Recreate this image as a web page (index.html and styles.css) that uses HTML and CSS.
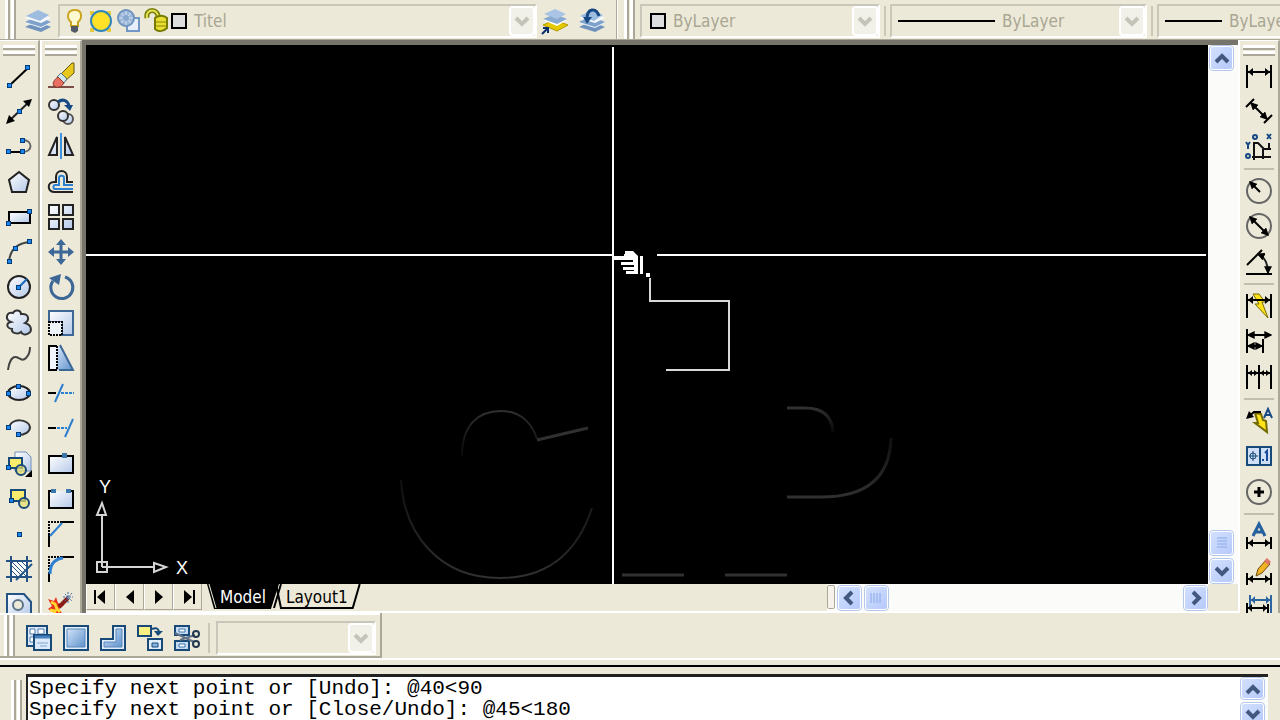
FILE: index.html
```html
<!DOCTYPE html>
<html lang="en">
<head>
<meta charset="utf-8">
<title>Drawing editor</title>
<link rel="stylesheet" href="styles.css">
</head>
<body>
<svg class="defs" aria-hidden="true">
  <defs>
    <linearGradient id="glass" x1="0" y1="0" x2="1" y2="1"><stop offset="0" stop-color="#ffffff"/><stop offset="1" stop-color="#b4c8e8"/></linearGradient>
    <linearGradient id="steel" x1="0" y1="0" x2="1" y2="1"><stop offset="0" stop-color="#d4e4f8"/><stop offset="1" stop-color="#5f92cc"/></linearGradient>
    <linearGradient id="fadeUp" x1="0" y1="0" x2="0" y2="1"><stop offset="0" stop-color="#303030"/><stop offset="1" stop-color="#080808"/></linearGradient>
    <linearGradient id="fadeDown" x1="0" y1="0" x2="0" y2="1"><stop offset="0" stop-color="#101010"/><stop offset="1" stop-color="#303030"/></linearGradient>
    <symbol id="chev-down" viewBox="0 0 16 16"><path d="M2 5l6 6 6-6" fill="none" stroke="currentColor" stroke-width="4"/></symbol>
    <symbol id="chev-up" viewBox="0 0 16 16"><path d="M2 12l6-6 6 6" fill="none" stroke="currentColor" stroke-width="4"/></symbol>
    <symbol id="chev-left" viewBox="0 0 16 16"><path d="M11 2L5 8l6 6" fill="none" stroke="currentColor" stroke-width="4"/></symbol>
    <symbol id="chev-right" viewBox="0 0 16 16"><path d="M5 2l6 6-6 6" fill="none" stroke="currentColor" stroke-width="4"/></symbol>
    <symbol id="node" viewBox="0 0 5 5"><rect width="5" height="5" fill="#003c78"/><rect x="1" y="1" width="3" height="3" fill="#1c86ee"/></symbol>
    <symbol id="hdim" viewBox="0 0 26 12"><path d="M1 0v12M25 0v12" stroke="#000" stroke-width="2"/><path d="M2 6h22" stroke="#000" stroke-width="2"/><path d="M2 6l5-4v8zM24 6l-5-4v8z"/></symbol>
    <symbol id="stack" viewBox="0 0 26 26"><path d="M0 19l12-6 14 6-10 5z" fill="#6f93bd"/><path d="M0 15l12-6 14 6-10 5z" fill="#eef4fb"/><path d="M0 14l12-6 14 6-10 5z" fill="#7fa2cb"/><path d="M0 10l12-6 14 6-10 5z" fill="#f5f9fd"/><path d="M1 8l12-6 11 5-9 6z" fill="#9dbce0"/></symbol>
    <marker id="tip" viewBox="0 0 6 6" refX="5" refY="3" markerWidth="8" markerHeight="8" markerUnits="userSpaceOnUse" orient="auto-start-reverse"><path d="M0 0l6 3-6 3z"/></marker>
  </defs>
</svg>

<header class="topbar">
  <div class="band">
    <span class="grip"></span>
    <button class="tool layers" aria-label="Layer properties"><svg viewBox="0 0 26 26"><use href="#stack"/></svg></button>
    <div class="combo combo-layer">
      <svg class="state" viewBox="0 0 108 26" aria-hidden="true">
        <path d="M12 2c-9 0-8 9-4 12v4h7v-4c4-3 5-12-3-12z" fill="#fffbd0" stroke="#c9a520" stroke-width="2"/><path d="M8 18h7v5l-3 2-4-2z" fill="#555b66"/>
        <path d="M27 3h4v4h-4zM44 3h4v4h-4zM27 20h4v4h-4zM44 20h4v4h-4z" fill="#e8c93c"/><circle cx="38" cy="13" r="10" fill="#ffe228" stroke="#3185b8" stroke-width="2"/>
        <path d="M65 10h11v13H64v-8" fill="#e6eefa" stroke="#7397c5" stroke-width="2"/><circle cx="63" cy="10" r="8" fill="#9eb9d9" stroke="#6e94bf" stroke-width="2"/><path d="M56 10h14M63 3v14M58 5l10 10M68 5L58 15" stroke="#d5e2f3"/><circle cx="63" cy="10" r="3" fill="#88a8d0"/>
        <path d="M84 10c-2-10 12-10 11 0v3" fill="none" stroke="#777b00" stroke-width="5"/><path d="M84 10c-2-10 12-10 11 0v3" fill="none" stroke="#e3e05a" stroke-width="2"/><path d="M92 10c4-3 9-3 12 0v10c-4 4-9 4-12 1z" fill="#e9df32" stroke="#777b00" stroke-width="2"/><path d="M93 14h10M93 18h10" stroke="#8a8500"/>
      </svg>
      <span class="swatch"></span>
      <select aria-label="Layer" disabled><option>Titel</option></select>
      <span class="drop"><svg viewBox="0 0 16 16"><use href="#chev-down"/></svg></span>
    </div>
    <button class="tool" aria-label="Make object's layer current"><svg viewBox="0 0 26 26"><path d="M1 17l12-5 13 5-11 6z" fill="#e4c800" stroke="#b39b00"/><path d="M1 12l12-5 12 5-10 6z" fill="#fff"/><path d="M1 11l12-5 12 5-10 5z" fill="#88a9d0"/><path d="M2 6l11-5 11 5-9 5z" fill="#a9c4e4"/><path d="M0 26l5-5M1 20h5v5" fill="none" stroke="#0b3070" stroke-width="2"/></svg></button>
    <button class="tool" aria-label="Layer previous"><svg viewBox="0 0 26 26"><use href="#stack"/><path d="M20 8c-3-9-12-8-12 3" fill="none" stroke="#174a85" stroke-width="3"/><path d="M4 9h9l-5 7z" fill="#174a85"/></svg></button>
  </div>
  <div class="band band-props">
    <span class="grip"></span>
    <div class="combo combo-color">
      <span class="swatch"></span>
      <select aria-label="Color" disabled><option>ByLayer</option></select>
      <span class="drop"><svg viewBox="0 0 16 16"><use href="#chev-down"/></svg></span>
    </div>
    <span class="vsep"></span>
    <div class="combo combo-line">
      <span class="sample"></span>
      <select aria-label="Linetype" disabled><option>ByLayer</option></select>
      <span class="drop"><svg viewBox="0 0 16 16"><use href="#chev-down"/></svg></span>
    </div>
    <span class="vsep"></span>
    <div class="combo combo-line">
      <span class="sample sample-short"></span>
      <select aria-label="Lineweight" disabled><option>ByLayer</option></select>
      <span class="drop"><svg viewBox="0 0 16 16"><use href="#chev-down"/></svg></span>
    </div>
  </div>
</header>

<main class="middle">
  <div class="palette" role="toolbar" aria-label="Draw">
    <span class="grip-top"></span>
    <div class="tools">
      <button class="tool" aria-label="Line"><svg viewBox="0 0 26 26"><path d="M4 22L22 5" stroke="#000" stroke-width="2"/><use href="#node" x="1" y="20" width="5" height="5"/><use href="#node" x="19" y="2" width="5" height="5"/></svg></button>
      <button class="tool" aria-label="Construction line"><svg viewBox="0 0 26 26"><path d="M3 23L23 4" stroke="#222" stroke-width="2"/><path d="M0 26l3-9 6 6zM26 1l-9 2 6 6z"/><use href="#node" x="11" y="11" width="5" height="5"/></svg></button>
      <button class="tool" aria-label="Polyline"><svg viewBox="0 0 26 26"><path d="M3 19h14" stroke="#000" stroke-width="2"/><path d="M17 7c10 0 10 12 0 12" fill="none" stroke="#666" stroke-width="2"/><use href="#node" x="0" y="16" width="5" height="5"/><use href="#node" x="14" y="16" width="5" height="5"/><use href="#node" x="14" y="5" width="5" height="5"/></svg></button>
      <button class="tool" aria-label="Polygon"><svg viewBox="0 0 26 26"><path d="M13 3l10 8-3 12H6L3 11z" fill="url(#glass)" stroke="#222" stroke-width="2"/></svg></button>
      <button class="tool" aria-label="Rectangle"><svg viewBox="0 0 26 26"><path d="M3 8h21v11H3z" fill="url(#glass)" stroke="#000" stroke-width="2"/><use href="#node" x="0" y="17" width="5" height="5"/><use href="#node" x="21" y="5" width="5" height="5"/></svg></button>
      <button class="tool" aria-label="Arc"><svg viewBox="0 0 26 26"><path d="M3 23C4 10 11 4 24 3" fill="none" stroke="#444" stroke-width="2"/><use href="#node" x="1" y="20" width="5" height="5"/><use href="#node" x="7" y="7" width="5" height="5"/><use href="#node" x="21" y="0" width="5" height="5"/></svg></button>
      <button class="tool" aria-label="Circle"><svg viewBox="0 0 26 26"><circle cx="13" cy="13" r="11" fill="url(#glass)" stroke="#222" stroke-width="2"/><path d="M13 13l8-8" stroke="#1668b8" stroke-width="2"/><use href="#node" x="10" y="11" width="5" height="5"/></svg></button>
      <button class="tool" aria-label="Revision cloud"><svg viewBox="0 0 26 26"><path d="M5 12C-2 9 1 1 7 3c2-4 8-3 8 1 8-1 9 6 4 9 7 2 7 8 4 10-4 3-7 1-8-1-3 3-10 1-9-3-6-1-6-6-1-7z" fill="url(#glass)" stroke="#333" stroke-width="2"/></svg></button>
      <button class="tool" aria-label="Spline"><svg viewBox="0 0 26 26"><path d="M2 25c1-8 4-14 8-13s6 5 10 1c3-3 4-6 4-11" fill="none" stroke="#444" stroke-width="2"/></svg></button>
      <button class="tool" aria-label="Ellipse"><svg viewBox="0 0 26 26"><ellipse cx="13" cy="13" rx="11" ry="7" fill="url(#glass)" stroke="#222" stroke-width="2"/><use href="#node" x="0" y="11" width="5" height="5"/><use href="#node" x="10" y="4" width="5" height="5"/><use href="#node" x="20" y="11" width="5" height="5"/></svg></button>
      <button class="tool" aria-label="Ellipse arc"><svg viewBox="0 0 26 26"><path d="M3 13C5 2 23 4 24 12c0 5-5 8-12 8" fill="url(#glass)" stroke="#333" stroke-width="2"/><use href="#node" x="0" y="10" width="5" height="5"/><use href="#node" x="10" y="17" width="5" height="5"/></svg></button>
      <button class="tool" aria-label="Insert block"><svg viewBox="0 0 26 26"><path d="M9 1h11l5 5v14H9z" fill="url(#glass)" stroke="#7391b8"/><path d="M3 7h13v10H3z" fill="#f8ec6c" stroke="#174a78" stroke-width="2"/><circle cx="15" cy="19" r="5" fill="#e9de68" fill-opacity=".7" stroke="#174a78" stroke-width="2"/><use href="#node" x="0" y="14" width="5" height="5"/><path d="M26 19v7h-7z"/></svg></button>
      <button class="tool" aria-label="Make block"><svg viewBox="0 0 26 26"><path d="M5 4h14v11H5z" fill="#f8ec6c" stroke="#174a78" stroke-width="2"/><circle cx="18" cy="17" r="5" fill="#e9de68" fill-opacity=".7" stroke="#174a78" stroke-width="2"/><use href="#node" x="3" y="12" width="5" height="5"/></svg></button>
      <button class="tool" aria-label="Point"><svg viewBox="0 0 26 26"><use href="#node" x="11" y="11" width="5" height="5"/></svg></button>
      <button class="tool" aria-label="Hatch"><svg viewBox="0 0 26 26"><path d="M5 5h16v16H5z" fill="#fff"/><path d="M5 9l12 12M5 14l7 7M5 5l16 16M10 5l11 11M15 5l6 6" stroke="#245485"/><path d="M5 0v26M21 0v26M0 5h26M0 21h26" stroke="#245485" stroke-width="2"/><path d="M26 8L10 24" stroke="#245485" stroke-width="2"/></svg></button>
      <button class="tool" aria-label="Region"><svg viewBox="0 0 26 26"><path d="M1 2h17l7 8v15H1z" fill="url(#glass)" stroke="#245485" stroke-width="2"/><circle cx="12" cy="13" r="5" fill="#ece9d8" stroke="#5b7389" stroke-width="2"/></svg></button>
    </div>
  </div>

  <div class="palette" role="toolbar" aria-label="Modify">
    <span class="grip-top"></span>
    <div class="tools">
      <button class="tool" aria-label="Erase"><svg viewBox="0 0 26 26"><path d="M0 24h26" stroke="#7b4d44" stroke-width="2"/><path d="M12 12L24 0h2v10L17 18z" fill="#e8c81d" stroke="#675914"/><path d="M9 14l4-4 6 6-4 5z" fill="#cfe6ee" stroke="#527482"/><path d="M10 14l6 6c-3 5-7 5-10 3-2-3 0-6 4-9z" fill="#e96f60" stroke="#8a3528"/></svg></button>
      <button class="tool" aria-label="Copy"><svg viewBox="0 0 26 26"><circle cx="6" cy="7" r="5" fill="url(#glass)" stroke="#333" stroke-width="2"/><circle cx="20" cy="21" r="5" fill="url(#glass)" stroke="#555" stroke-width="2"/><circle cx="15" cy="18" r="5" fill="url(#glass)" stroke="#333" stroke-width="2"/><path d="M10 4c5-4 10-1 11 4" fill="none" stroke="#174a85" stroke-width="3"/><path d="M16 7h9l-3 6z" fill="#174a85"/></svg></button>
      <button class="tool" aria-label="Mirror"><svg viewBox="0 0 26 26"><path d="M9 4v18H1zM17 4v18h8z" fill="url(#glass)" stroke="#222" stroke-width="2"/><path d="M13 0v26" stroke="#3c92e0" stroke-width="2"/></svg></button>
      <button class="tool" aria-label="Offset"><svg viewBox="0 0 26 26"><path d="M25 23H6c-7-1-7-10 0-10h2V8c0-8 11-8 11 0v5h6" fill="none" stroke="#222" stroke-width="2"/><path d="M25 20H7c-2 0-2-4 0-4h4V9c0-3 5-3 5 0v7h9" fill="none" stroke="#2d7fd0" stroke-width="2"/></svg></button>
      <button class="tool" aria-label="Array"><svg viewBox="0 0 26 26"><path d="M1 1h10v10H1zM15 1h10v10H15zM1 15h10v10H1zM15 15h10v10H15z" fill="url(#glass)" stroke="#222" stroke-width="2"/></svg></button>
      <button class="tool" aria-label="Move"><svg viewBox="0 0 26 26"><path d="M13 4v18M4 13h18" stroke="#3c6796" stroke-width="3"/><path d="M13 0l5 6H8zM13 26l5-6H8zM0 13l6-5v10zM26 13l-6-5v10z" fill="#3c6796"/></svg></button>
      <button class="tool" aria-label="Rotate"><svg viewBox="0 0 26 26"><path d="M5 7a11 11 0 1 0 12-4" fill="none" stroke="#3c6796" stroke-width="3"/><path d="M1 4l12-4-2 11z" fill="#3c6796"/></svg></button>
      <button class="tool" aria-label="Scale"><svg viewBox="0 0 26 26"><path d="M1 12V1h24v24H14V12z" fill="url(#glass)" stroke="#3c6796" stroke-width="2"/><path d="M1 12h13v13H1z" fill="#eef3fa" stroke="#000" stroke-width="2" stroke-dasharray="2 1"/></svg></button>
      <button class="tool" aria-label="Stretch"><svg viewBox="0 0 26 26"><path d="M13 1l12 24H9V1z" fill="url(#steel)"/><path d="M12 0l13 25H11" fill="none" stroke="#3c6796" stroke-width="2"/><path d="M9 1H1v24h8" fill="#f2f5fb" stroke="#000" stroke-width="2"/><path d="M9 1v24" stroke="#000" stroke-width="2" stroke-dasharray="2 1"/></svg></button>
      <button class="tool" aria-label="Trim"><svg viewBox="0 0 26 26"><path d="M0 13h8" stroke="#000" stroke-width="2"/><path d="M15 4L7 22" stroke="#2d7fd0" stroke-width="2"/><path d="M13 13h13" stroke="#2d7fd0" stroke-width="2" stroke-dasharray="3 1"/></svg></button>
      <button class="tool" aria-label="Extend"><svg viewBox="0 0 26 26"><path d="M0 13h8" stroke="#000" stroke-width="2"/><path d="M25 4l-8 18" stroke="#2d7fd0" stroke-width="2"/><path d="M9 13h10" stroke="#2d7fd0" stroke-width="2" stroke-dasharray="3 1"/></svg></button>
      <button class="tool" aria-label="Break at point"><svg viewBox="0 0 26 26"><path d="M1 5h24v17H1z" fill="url(#glass)" stroke="#000" stroke-width="2"/><path d="M14 2h5v5h-5z" fill="#3c77ac"/></svg></button>
      <button class="tool" aria-label="Break"><svg viewBox="0 0 26 26"><path d="M5 5H1v17h24V5h-4" fill="url(#glass)" stroke="#000" stroke-width="2"/><path d="M3 3h5v4H3zM18 3h5v4h-5z" fill="#3c77ac"/></svg></button>
      <button class="tool" aria-label="Chamfer"><svg viewBox="0 0 26 26"><path d="M1 14V1h13" fill="none" stroke="#000" stroke-width="2" stroke-dasharray="2 1"/><path d="M14 1h12M1 14v12" stroke="#000" stroke-width="2"/><path d="M2 15L14 2" stroke="#2d7fd0" stroke-width="2"/></svg></button>
      <button class="tool" aria-label="Fillet"><svg viewBox="0 0 26 26"><path d="M1 14V1h13" fill="none" stroke="#000" stroke-width="2" stroke-dasharray="2 1"/><path d="M14 1h12M1 16v10" stroke="#000" stroke-width="2"/><path d="M2 18C2 8 6 3 15 2" fill="none" stroke="#2d7fd0" stroke-width="3"/></svg></button>
      <button class="tool" aria-label="Explode"><svg viewBox="0 0 26 26"><path d="M0 7l6 2 2-4 2 6 6 2-5 4 5 7-6-2-3 4-2-6-5-3 4-3z" fill="#e9301c"/><path d="M3 10l4 2 2 5 3 3M2 18l5 1-1 5" fill="none" stroke="#ffd52e" stroke-width="3"/><path d="M11 15l9-9" stroke="#8c1c18" stroke-width="4"/><path d="M20 0v12M15 5h10M17 2l7 7M24 1l-7 8" stroke="#456fa5" stroke-dasharray="2 1"/></svg></button>
    </div>
  </div>

  <section class="workspace">
    <div class="canvas">
      <svg viewBox="86 45 1122 539" preserveAspectRatio="xMinYMin slice" role="img" aria-label="Drawing area">
        <g fill="none" stroke="#303030" stroke-width="3">
          <path d="M462 456C462 425 478 411 501 411c20 0 31 13 36 28" stroke="url(#fadeUp)" stroke-width="2"/>
          <path d="M537 440l51-12"/>
          <path d="M401 480c3 54 38 98 99 98 54 0 80-33 92-70" stroke="url(#fadeDown)" stroke-width="2"/>
          <path d="M787 408h18c18 0 27 9 28 24" stroke="url(#fadeUp)"/>
          <path d="M787 497h34c42 0 69-17 70-59" stroke="url(#fadeDown)"/>
          <path d="M622 575h62M725 575h62"/>
        </g>
        <g fill="none" stroke="#fff" stroke-width="2">
          <path d="M86 255h527M657 255h549M613 47v537"/>
          <path d="M650 278v23h79v69h-63" stroke="#d8d8d8"/>
        </g>
        <g fill="#fff">
          <path d="M613 256h11v-2h1v-3h8l5 5v18h-12v-3h8v-1h-11v-3h11v-2h-13v-3h12v-2h-20z"/>
          <path d="M640 256h3v18h-3zM646 273h4v4h-4z"/>
        </g>
        <g fill="none" stroke="#d4d4d4" stroke-width="2">
          <path d="M102 567v-52M102 567h52M97 562h10v10H97zM97 515h9l-4-12zM154 563v9l12-5z"/>
        </g>
        <g class="axis"><text x="99" y="493">Y</text><text x="176" y="574">X</text></g>
      </svg>
    </div>
    <div class="vscroll">
      <button class="sbtn" aria-label="Scroll up"><svg viewBox="0 0 16 16"><use href="#chev-up"/></svg></button>
      <span class="track"></span>
      <button class="sbtn" aria-label="Vertical scroll thumb"><svg viewBox="0 0 16 16"><path d="M3 3h10M3 6h10M3 9h10M3 12h10" stroke="#8aa8e8"/></svg></button>
      <button class="sbtn" aria-label="Scroll down"><svg viewBox="0 0 16 16"><use href="#chev-down"/></svg></button>
    </div>
    <div class="tabrow">
      <div class="tabnav">
        <button aria-label="First tab"><svg viewBox="0 0 16 16"><path d="M1 1h2v14H1zM12 1v14L4 8z"/></svg></button>
        <button aria-label="Previous tab"><svg viewBox="0 0 16 16"><path d="M12 1v14L4 8z"/></svg></button>
        <button aria-label="Next tab"><svg viewBox="0 0 16 16"><path d="M4 1v14l8-7z"/></svg></button>
        <button aria-label="Last tab"><svg viewBox="0 0 16 16"><path d="M4 1v14l8-7zM13 1h2v14h-2z"/></svg></button>
      </div>
      <div class="tabs" role="tablist">
        <button class="tab tab-model" role="tab" aria-selected="true"><svg viewBox="0 0 72 26" preserveAspectRatio="none" aria-hidden="true"><path d="M0 0l7 25h57l8-25z"/><path d="M2 0l7 24" stroke="#ece9d8" stroke-width="1"/></svg><span>Model</span></button>
        <button class="tab tab-layout" role="tab" aria-selected="false"><svg viewBox="0 0 88 26" preserveAspectRatio="none" aria-hidden="true"><path d="M8 0L2 24h76L87 0" fill="#ece9d8"/><path d="M8 0L1 24M3 0l5 24h72l7-24" fill="none" stroke="#000" stroke-width="2"/></svg><span>Layout1</span></button>
      </div>
      <div class="hscroll">
        <span class="splitter"></span>
        <button class="sbtn" aria-label="Scroll left"><svg viewBox="0 0 16 16"><use href="#chev-left"/></svg></button>
        <button class="sbtn" aria-label="Horizontal scroll thumb"><svg viewBox="0 0 16 16"><path d="M3 3v10M6 3v10M9 3v10M12 3v10" stroke="#8aa8e8"/></svg></button>
        <span class="track"></span>
        <button class="sbtn" aria-label="Scroll right"><svg viewBox="0 0 16 16"><use href="#chev-right"/></svg></button>
      </div>
    </div>
  </section>

  <div class="palette palette-dim" role="toolbar" aria-label="Dimension">
    <span class="grip-top"></span>
    <div class="group">
      <button class="tool" aria-label="Linear dimension"><svg viewBox="0 0 26 26"><path d="M1 2v23M25 2v23M2 9h22" stroke="#000" stroke-width="2"/><path d="M2 9l5-4v8zM24 9l-5-4v8z"/></svg></button>
      <button class="tool" aria-label="Aligned dimension"><svg viewBox="0 0 26 26"><path d="M0 9l8-8M18 25l8-8" stroke="#000" stroke-width="2"/><path d="M5 5l16 16" stroke="#000" stroke-width="2" marker-start="url(#tip)" marker-end="url(#tip)"/></svg></button>
      <button class="tool" aria-label="Ordinate dimension"><svg viewBox="0 0 26 26"><path d="M8 8v18M6 23h19M8 9h4l6 6h7M23 9v6M17 15v10" fill="none" stroke="#111" stroke-width="2"/><path d="M0 8l2 3 2-3M2 11v4M21 0l4 5M25 0l-4 5" stroke="#174a85" stroke-width="2" fill="none"/><circle cx="9" cy="3" r="2" fill="none" stroke="#174a85" stroke-width="2"/><circle cx="2" cy="22" r="2" fill="none" stroke="#174a85" stroke-width="2"/></svg></button>
    </div>
    <div class="group">
      <button class="tool" aria-label="Radius dimension"><svg viewBox="0 0 26 26"><circle cx="13" cy="13" r="12" fill="none" stroke="#666" stroke-width="2"/><path d="M14 14L4 4" stroke="#000" stroke-width="2" marker-end="url(#tip)"/></svg></button>
      <button class="tool" aria-label="Diameter dimension"><svg viewBox="0 0 26 26"><circle cx="13" cy="13" r="12" fill="none" stroke="#666" stroke-width="2"/><path d="M4 4l18 18" stroke="#000" stroke-width="2" marker-start="url(#tip)" marker-end="url(#tip)"/></svg></button>
      <button class="tool" aria-label="Angular dimension"><svg viewBox="0 0 26 26"><path d="M0 25h26M1 16L16 1" stroke="#000" stroke-width="2"/><path d="M12 5c7 3 10 10 10 19" fill="none" stroke="#222" stroke-width="2" marker-start="url(#tip)" marker-end="url(#tip)"/></svg></button>
    </div>
    <div class="group">
      <button class="tool" aria-label="Quick dimension"><svg viewBox="0 0 26 26"><path d="M7 1h6l6 8h-3l6 16L9 11h4z" fill="#ffe21a" stroke="#746c00"/><path d="M1 1v24M25 1v24M2 7h22" stroke="#000" stroke-width="2"/><path d="M2 7l5-4v8zM24 7l-5-4v8z"/></svg></button>
      <button class="tool" aria-label="Baseline dimension"><svg viewBox="0 0 26 26"><path d="M1 1v24M17 11v14" stroke="#000" stroke-width="2"/><path d="M2 7h23" stroke="#000" stroke-width="2" marker-start="url(#tip)" marker-end="url(#tip)"/><path d="M2 18h14" stroke="#000" stroke-width="2" marker-start="url(#tip)" marker-end="url(#tip)"/></svg></button>
      <button class="tool" aria-label="Continue dimension"><svg viewBox="0 0 26 26"><path d="M1 1v24M13 1v24M25 1v24M2 9h22" stroke="#000" stroke-width="2"/><path d="M2 9l4-3v6zM12 9L8 6v6zM14 9l4-3v6zM24 9l-4-3v6z"/></svg></button>
    </div>
    <div class="group">
      <button class="tool" aria-label="Quick leader"><svg viewBox="0 0 26 26"><path d="M9 5l6 1 2 6 3 1 1 11L9 15h3z" fill="#ffe21a" stroke="#746c00" stroke-width="2"/><path d="M2 9l6-5h7" fill="none" stroke="#000" stroke-width="2"/><path d="M0 11l3-8 5 6z"/><path d="M18 10l4-9 4 9M20 7h5" fill="none" stroke="#174a85" stroke-width="2"/></svg></button>
      <button class="tool" aria-label="Tolerance"><svg viewBox="0 0 26 26"><path d="M1 4h24v18H1z" fill="#cfe0f6" stroke="#174a78" stroke-width="2"/><path d="M14 4v18" stroke="#174a78" stroke-width="2"/><path d="M3 13h9M7 8v10" stroke="#174a78"/><circle cx="7" cy="13" r="3" fill="none" stroke="#174a78"/><path d="M16 17h2M19 10l2-2v10" fill="none" stroke="#174a98" stroke-width="2"/></svg></button>
      <button class="tool" aria-label="Center mark"><svg viewBox="0 0 26 26"><circle cx="13" cy="13" r="12" fill="none" stroke="#666" stroke-width="2"/><path d="M13 8v10M8 13h10" stroke="#000" stroke-width="3"/></svg></button>
    </div>
    <div class="group">
      <button class="tool" aria-label="Dimension edit"><svg viewBox="0 0 26 26"><use href="#hdim" x="0" y="14" width="26" height="12"/><path d="M7 13l6-12 6 12M9 9h8" fill="none" stroke="#245f9e" stroke-width="3"/></svg></button>
      <button class="tool" aria-label="Dimension text edit"><svg viewBox="0 0 26 26"><use href="#hdim" x="0" y="15" width="26" height="12"/><path d="M10 18l2-7 8-9 4 4-8 9z" fill="#f0b323" stroke="#6f4a10"/><path d="M18 3l3-3 4 4-3 3z" fill="#dd7765"/></svg></button>
      <button class="tool" aria-label="Dimension update"><svg viewBox="0 0 26 26"><path d="M4 1v12M25 1v24M5 6h19" stroke="#2c659f" stroke-width="2"/><path d="M5 6l4-4v8zM24 6l-4-4v8z" fill="#2c659f"/><path d="M1 9v16M22 10v16M2 14h19" stroke="#000" stroke-width="2"/><path d="M2 14l4-4v8zM21 14l-4-4v8z"/></svg></button>
    </div>
  </div>
</main>

<section class="dock">
  <div class="band band-ref">
    <span class="grip"></span>
    <button class="tool" aria-label="Edit block or xref"><svg viewBox="0 0 26 26"><path d="M1 1h20v20H1z" fill="#dce8f8" stroke="#174a78" stroke-width="2"/><path d="M4 4h5v5H4zM12 4h6v5h-6zM4 12h5v5H4z" fill="#fff" stroke="#4c7db2"/><path d="M8 10h17v15H8z" fill="#dce9fb" stroke="#174a78" stroke-width="2"/><path d="M9 12h15" stroke="#4782c0" stroke-width="3"/><path d="M11 18h11M14 21h7" stroke="#7da4cc"/></svg></button>
    <button class="tool" aria-label="Add to working set"><svg viewBox="0 0 26 26"><path d="M1 1h24v24H1z" fill="#e2edfa" stroke="#174a78" stroke-width="2"/><path d="M4 4h18v18H4z" fill="url(#steel)" stroke="#5888ba"/></svg></button>
    <button class="tool" aria-label="Remove from working set"><svg viewBox="0 0 26 26"><path d="M13 1h12v24H1V14h12z" fill="#e2edfa" stroke="#174a78" stroke-width="2"/><path d="M16 4h6v18H4v-5h12z" fill="url(#steel)" stroke="#5888ba"/></svg></button>
    <button class="tool" aria-label="Save back changes"><svg viewBox="0 0 26 26"><path d="M1 1h13v10H1z" fill="#f8f080" stroke="#174a78" stroke-width="2"/><path d="M15 4c5-2 7 0 7 4" fill="none" stroke="#174a78" stroke-width="2"/><path d="M17 6h9l-5 5z" fill="#174a78"/><path d="M11 14h14v11H11z" fill="#e2edfa" stroke="#174a78" stroke-width="2"/><path d="M15 18h6v4h-6z" fill="#8db5e4" stroke="#174a78"/></svg></button>
    <button class="tool" aria-label="Discard changes"><svg viewBox="0 0 26 26"><path d="M1 1h14v9H1zM1 16h14v9H1z" fill="#c7dbf4" stroke="#174a78" stroke-width="2"/><path d="M5 4h6v3H5zM5 19h6v3H5z" fill="#fff" stroke="#3c77ac"/><path d="M1 8l19 9M6 15l15-5" stroke="#62738a" stroke-width="2"/><circle cx="22" cy="9" r="3" fill="none" stroke="#223850" stroke-width="2"/><circle cx="22" cy="19" r="3" fill="none" stroke="#223850" stroke-width="2"/></svg></button>
    <span class="vsep"></span>
    <div class="combo combo-ref">
      <select aria-label="Reference name" disabled><option></option></select>
      <span class="drop"><svg viewBox="0 0 16 16"><use href="#chev-down"/></svg></span>
    </div>
  </div>
</section>

<footer class="command">
  <span class="grip"></span>
  <div class="cmdbox">
    <textarea aria-label="Command history" readonly>Specify next point or [Undo]: @40&lt;90
Specify next point or [Close/Undo]: @45&lt;180</textarea>
    <div class="vscroll">
      <button class="sbtn" aria-label="Scroll history up"><svg viewBox="0 0 16 16"><use href="#chev-up"/></svg></button>
      <button class="sbtn" aria-label="Scroll history down"><svg viewBox="0 0 16 16"><use href="#chev-down"/></svg></button>
    </div>
  </div>
</footer>
</body>
</html>
```
FILE: styles.css
```css
:root {
  --face: #ece9d8;
  --shade: #aca899;
  --dim: #a9a693;
  --ui: "DejaVu Sans Condensed", "DejaVu Sans", sans-serif;
}

* { box-sizing: border-box; }

body {
  margin: 0;
  height: 100vh;
  overflow: hidden;
  display: flex;
  flex-direction: column;
  background: var(--face);
  font: 17px/24px var(--ui);
}

button {
  margin: 0;
  padding: 0;
  border: 0;
  background: none;
  color: #000;
  font: inherit;
}

svg { display: block; }

.defs { position: absolute; width: 0; height: 0; }

/* Horizontal bars */
.topbar {
  flex: none;
  display: flex;
  height: 40px;
  overflow: hidden;
  border-bottom: 1px solid var(--shade);
}

.band {
  flex: none;
  display: flex;
  align-items: center;
  gap: 11px;
  padding: 2px 11px 0 5px;
  border-right: 1px solid var(--shade);
}

.band-props { gap: 4px; padding-left: 6px; border-left: 1px solid #fff; }

.grip {
  flex: none;
  align-self: stretch;
  width: 11px;
  margin-top: -2px;
  border-right: 2px solid var(--shade);
  background: linear-gradient(90deg, #fff 0 3px, var(--shade) 3px 5px, var(--face) 5px 6px, #fff 6px);
}

.band-props .grip { margin-right: 1px; }

.tool {
  flex: none;
  display: grid;
  place-items: center;
}

.tool svg { width: 26px; height: 26px; overflow: visible; }

.layers { margin: 0 -4px 0 -2px; }

.combo {
  flex: none;
  display: flex;
  align-items: center;
  height: 34px;
  border: 2px solid #c9c7ba;
  border-right-color: #fff;
  border-bottom-color: #fff;
}

.combo-layer { width: 479px; margin-right: -6px; }
.combo-color { width: 240px; padding-left: 8px; }
.combo-line { width: 257px; padding-left: 6px; }
.combo-ref { width: 160px; }

.state { width: 108px; height: 26px; margin-left: 3px; }

.swatch {
  flex: none;
  width: 16px;
  height: 16px;
  border: 2px solid #000;
  background: #dedede;
}

.sample { flex: none; width: 97px; height: 2px; background: #000; }
.sample-short { width: 57px; }

.combo select {
  flex: 1;
  min-width: 0;
  height: 28px;
  margin-left: 7px;
  padding: 0;
  border: 0;
  appearance: none;
  background: none;
  color: var(--dim);
  font: inherit;
  opacity: 1;
}

.drop {
  flex: none;
  display: grid;
  place-items: center;
  width: 26px;
  height: 30px;
  border: 2px solid #fff;
  border-radius: 4px;
  background: #f1f0e9;
  color: #c5c4b8;
}

.drop svg { width: 16px; height: 16px; }

.vsep { flex: none; width: 2px; height: 30px; background: #cbc8b8; }

/* Middle: palettes and drawing window */
.middle {
  flex: 1;
  min-height: 0;
  display: flex;
  overflow: hidden;
}

.palette {
  flex: none;
  width: 42px;
  overflow: hidden;
  border-top: 1px solid #fff;
  border-left: 2px solid #fff;
  border-right: 2px solid var(--shade);
}

.palette:first-child { width: 40px; border-left: 0; }

.grip-top {
  display: block;
  height: 11px;
  margin: 4px 3px 2px;
  border-bottom: 2px solid var(--shade);
  background: linear-gradient(#fff 0 3px, var(--shade) 3px 5px, var(--face) 5px 6px, #fff 6px);
}

.tools, .group {
  display: grid;
  grid-auto-rows: 35px 35px 36px 35px;
}

.group { grid-auto-rows: 35px 36px 35px; }

.group + .group::before {
  content: "";
  grid-row: 1;
  height: 2px;
  margin: 4px 4px 0;
  background: #c1beae;
}

.group + .group { grid-template-rows: 9px; }

.workspace {
  flex: 1;
  min-width: 0;
  display: grid;
  grid-template: minmax(0, 1fr) 29px / minmax(0, 1fr) 30px;
  border-top: 5px solid #77756b;
  border-left: 4px solid #77756b;
}

.canvas { background: #000; overflow: hidden; }
.canvas svg { width: 100%; height: 100%; }

.axis { fill: #fff; font: 18px "Liberation Sans", sans-serif; }

.vscroll {
  display: flex;
  flex-direction: column;
  align-items: center;
  gap: 2px;
  padding-right: 3px;
  background: #fbfbf9;
}

.track { flex: 1; }

.sbtn {
  flex: none;
  display: grid;
  place-items: center;
  width: 25px;
  height: 26px;
  border: 2px solid #fff;
  border-radius: 4px;
  outline: 1px solid #b4c7ec;
  outline-offset: -1px;
  background: linear-gradient(135deg, #d3e0fe, #b5c9fa);
  color: #43587f;
}

.sbtn svg { width: 16px; height: 16px; }

.tabrow {
  grid-column: 1 / -1;
  display: flex;
  padding-right: 30px;
  border-bottom: 2px solid #fff;
}

.tabnav { display: flex; padding-bottom: 1px; }

.tabnav button {
  display: grid;
  place-items: center;
  width: 29px;
  border-right: 1px solid var(--shade);
  border-bottom: 1px solid var(--shade);
  border-left: 1px solid #fff;
}

.tabnav svg { width: 16px; height: 16px; }

.tabs { flex: 1; display: flex; padding-left: 5px; }

.tab {
  position: relative;
  height: 26px;
  padding: 0 13px;
  line-height: 24px;
}

.tab svg { position: absolute; inset: 0; width: 100%; height: 100%; }
.tab span { position: relative; }
.tab-model { color: #fff; }
.tab-layout { margin-left: -6px; }

.hscroll {
  flex: none;
  display: flex;
  align-items: center;
  gap: 2px;
  width: 34%;
  background: #fbfbf9;
}

.splitter {
  align-self: stretch;
  width: 8px;
  margin: 1px 0 2px;
  border: 1px solid var(--shade);
  border-radius: 2px;
  background: #f5f3ea;
}

/* Reference editing toolbar */
.dock {
  flex: none;
  display: flex;
  height: 46px;
  border-bottom: 1px solid #fff;
}

.dock .band {
  padding: 6px 4px 0;
  border: solid var(--shade);
  border-width: 0 2px 2px 0;
  box-shadow: inset 0 2px #fff;
}

.dock .grip { margin-top: -4px; }
.dock .vsep { margin: 0 -5px 0 -3px; }

/* Command window */
.command {
  flex: none;
  display: flex;
  height: 61px;
  padding-right: 12px;
  background: linear-gradient(#fff 0 1px, var(--face) 1px 6px, #000 6px 8px, var(--face) 8px);
}

.command .grip { margin: 21px 4px 0 11px; }

.cmdbox {
  flex: 1;
  display: flex;
  margin-top: 15px;
  border-top: 3px solid #222;
  border-left: 2px solid #222;
  background: #fff;
}

.cmdbox textarea {
  flex: 1;
  display: block;
  padding: 1px 0 0 1px;
  border: 0;
  resize: none;
  overflow: hidden;
  background: #fff;
  color: #000;
  font: 21px/21px "Liberation Mono", monospace;
}

.cmdbox .sbtn { height: 23px; }
```
